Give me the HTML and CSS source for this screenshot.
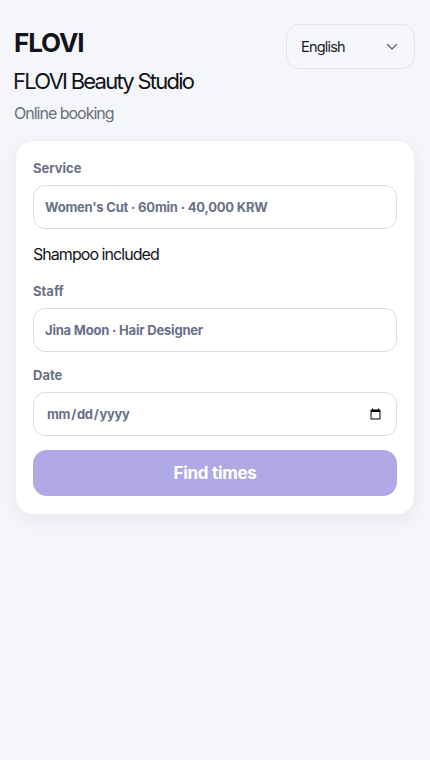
FILE: index.html
```html
<!DOCTYPE html>
<html lang="en">
<head>
<meta charset="utf-8">
<title>FLOVI</title>
<link rel="stylesheet" href="styles.css">
</head>
<body>
<div class="page">
  <header class="header">
    <div class="brand">
      <div class="logo">FLOVI</div>
      <h1 class="studio">FLOVI Beauty Studio</h1>
      <p class="sub">Online booking</p>
    </div>
    <div class="lang">
      <span>English</span>
      <svg class="chev" width="12" height="8" viewBox="0 0 12 8"><path d="M1.5 1.5L6 6L10.5 1.5" fill="none" stroke="#6b6f7a" stroke-width="1.5" stroke-linecap="round" stroke-linejoin="round"/></svg>
    </div>
  </header>
  <section class="card">
    <label class="label">Service</label>
    <div class="field">Women's Cut · 60min · 40,000 KRW</div>
    <p class="hint">Shampoo included</p>
    <label class="label">Staff</label>
    <div class="field">Jina Moon · Hair Designer</div>
    <label class="label label-gap">Date</label>
    <input class="field date" type="date">
    <button class="btn" type="button">Find times</button>
  </section>
</div>
</body>
</html>
```
FILE: styles.css
```css
* { box-sizing: border-box; }
html, body { margin: 0; padding: 0; }
body {
  background: #f5f6fa;
  font-family: Inter, "Noto Sans", sans-serif;
  color: #111318;
}
.page { padding: 24px 15px; }
.header {
  display: flex;
  justify-content: space-between;
  align-items: flex-start;
}
.brand { padding-top: 4px; margin-left: -1px; }
.logo {
  font-size: 26px;
  font-weight: 700;
  line-height: 30px;
  letter-spacing: -1.1px;
}
.studio {
  margin: 10px 0 0 -1px;
  font-size: 22px;
  font-weight: 400;
  line-height: 26px;
  letter-spacing: -1.75px;
}
.sub {
  margin: 9px 0 0;
  font-size: 16px;
  line-height: 20px;
  color: #6b6f7b;
  letter-spacing: -1px;
}
.lang {
  width: 129px;
  height: 45px;
  border: 1px solid #e2e5ee;
  border-radius: 13px;
  background: #f6f7fb;
  display: flex;
  align-items: center;
  justify-content: space-between;
  padding: 0 16px 0 14px;
  font-size: 14.5px;
  color: #1a1d24;
  letter-spacing: -0.8px;
}
.chev { margin-top: 1px; }
.card {
  margin-top: 17px;
  background: #fff;
  border-radius: 18px;
  border: 1px solid #eceef4;
  box-shadow: 0 6px 18px rgba(30, 35, 70, 0.06);
  padding: 19px 17px 18px;
  display: flex;
  flex-direction: column;
}
.label {
  font-size: 13px;
  font-weight: 700;
  line-height: 16px;
  color: #6b7285;
  margin-bottom: 9px;
  letter-spacing: 0;
}
.field {
  height: 44px;
  border: 1px solid #dcdbe6;
  border-radius: 12px;
  background: #fff;
  display: flex;
  align-items: center;
  padding: 0 11px;
  font-family: Inter, "Noto Sans", sans-serif;
  font-size: 13px;
  font-weight: 700;
  color: #697089;
  letter-spacing: -0.2px;
}
.hint {
  margin: 15px 0 19px;
  font-size: 16px;
  line-height: 20px;
  letter-spacing: -0.95px;
  color: #111318;
}
.label-gap { margin-top: 15px; }
.date {
  display: block;
  width: 100%;
  outline: none;
  padding: 0 12px 0 12px;
  letter-spacing: -0.3px;
}
.btn {
  margin-top: 14px;
  height: 46px;
  border: none;
  border-radius: 14px;
  background: #b0a9e6;
  color: #fff;
  font-family: Inter, "Noto Sans", sans-serif;
  font-size: 17px;
  font-weight: 700;
  letter-spacing: -0.3px;
}
```
